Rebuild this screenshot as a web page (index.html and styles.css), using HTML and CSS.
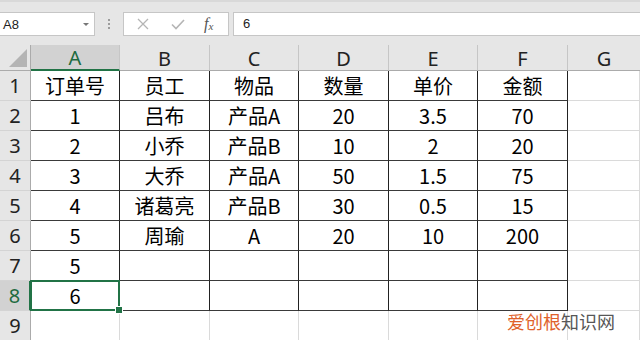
FILE: index.html
```html
<!DOCTYPE html>
<html lang="zh-CN">
<head>
<meta charset="utf-8">
<link rel="stylesheet" href="styles.css">
</head>
<body>
<div class="app">
  <div class="toolbar">
    <div class="namebox"><span class="ref">A8</span><span class="caret"></span></div>
    <div class="grip"><i></i><i></i><i></i></div>
    <div class="fbtns">
      <svg class="ic" width="14" height="14" viewBox="0 0 14 14"><path d="M2 2L12 12M12 2L2 12" stroke="#b5b5b5" stroke-width="1.3" fill="none"/></svg>
      <svg class="ic" width="16" height="14" viewBox="0 0 16 14"><path d="M2 7.5L6 11.5L14 3" stroke="#b5b5b5" stroke-width="1.6" fill="none"/></svg>
      <span class="fx">f<sub>x</sub></span>
    </div>
    <div class="finput">6</div>
  </div>
  <div class="sheet">
    <div class="corner"><span class="tri"></span></div>
    <div class="ch active">A</div><div class="ch">B</div><div class="ch">C</div><div class="ch">D</div><div class="ch">E</div><div class="ch">F</div><div class="ch last">G</div>

    <div class="rh">1</div><div class="c t">订单号</div><div class="c t">员工</div><div class="c t">物品</div><div class="c t">数量</div><div class="c t">单价</div><div class="c t">金额</div><div class="c"></div>
    <div class="rh">2</div><div class="c t">1</div><div class="c t">吕布</div><div class="c t">产品A</div><div class="c t">20</div><div class="c t">3.5</div><div class="c t">70</div><div class="c"></div>
    <div class="rh">3</div><div class="c t">2</div><div class="c t">小乔</div><div class="c t">产品B</div><div class="c t">10</div><div class="c t">2</div><div class="c t">20</div><div class="c"></div>
    <div class="rh">4</div><div class="c t">3</div><div class="c t">大乔</div><div class="c t">产品A</div><div class="c t">50</div><div class="c t">1.5</div><div class="c t">75</div><div class="c"></div>
    <div class="rh">5</div><div class="c t">4</div><div class="c t">诸葛亮</div><div class="c t">产品B</div><div class="c t">30</div><div class="c t">0.5</div><div class="c t">15</div><div class="c"></div>
    <div class="rh">6</div><div class="c t">5</div><div class="c t">周瑜</div><div class="c t">A</div><div class="c t">20</div><div class="c t">10</div><div class="c t">200</div><div class="c"></div>
    <div class="rh">7</div><div class="c t">5</div><div class="c t"></div><div class="c t"></div><div class="c t"></div><div class="c t"></div><div class="c t"></div><div class="c"></div>
    <div class="rh active">8</div><div class="c t sel">6</div><div class="c t"></div><div class="c t"></div><div class="c t"></div><div class="c t"></div><div class="c t"></div><div class="c"></div>
    <div class="rh">9</div><div class="c"></div><div class="c"></div><div class="c"></div><div class="c"></div><div class="c"></div><div class="c"></div><div class="c"></div>
  </div>
  <div class="watermark"><span class="wm-a">爱创根</span><span class="wm-b">知识网</span></div>
</div>
</body>
</html>
```
FILE: styles.css
```css
* { box-sizing: border-box; }
html, body { margin: 0; padding: 0; }
body {
  width: 640px;
  height: 340px;
  overflow: hidden;
  background: #fff;
  font-family: "Noto Sans CJK SC", "Noto Sans", sans-serif;
}
.app { position: relative; width: 640px; height: 340px; overflow: hidden; }

.toolbar {
  height: 45px;
  background: #e6e6e6;
  border-top: 2px solid #d9d9d9;
  display: flex;
  align-items: flex-start;
  padding-top: 10px;
}
.namebox {
  width: 95px;
  height: 24px;
  background: #fff;
  border: 1px solid #c6c6c6;
  border-left: none;
  display: flex;
  align-items: center;
  justify-content: space-between;
  padding: 0 5px 0 3px;
  font-family: "Liberation Sans", "Noto Sans", sans-serif;
  font-size: 13px;
  color: #222;
}
.caret {
  width: 0; height: 0;
  border-left: 3.5px solid transparent;
  border-right: 3.5px solid transparent;
  border-top: 3.5px solid #777;
}
.grip {
  width: 28px;
  height: 24px;
  display: flex;
  flex-direction: column;
  align-items: center;
  justify-content: center;
  gap: 2px;
}
.grip i { display: block; width: 2px; height: 2px; background: #9c9c9c; }
.fbtns {
  width: 106px;
  height: 24px;
  background: #fff;
  border: 1px solid #c6c6c6;
  display: flex;
  align-items: center;
  padding-left: 12px;
}
.fbtns .ic { flex: none; }
.fbtns .ic + .ic { margin-left: 20px; }
.fx {
  margin-left: 18px;
  font-family: "Liberation Serif", serif;
  font-style: italic;
  font-size: 16px;
  color: #555;
}
.fx sub { font-size: 11px; vertical-align: -1px; }
.finput {
  flex: 1;
  margin-left: 4px;
  height: 24px;
  background: #fff;
  border: 1px solid #c6c6c6;
  border-right: none;
  padding-left: 9px;
  font-family: "Liberation Sans", sans-serif;
  font-size: 13px;
  line-height: 22px;
  color: #222;
}

.sheet {
  display: grid;
  grid-template-columns: 31px 89px 90px 89px 90px 89px 90px 1fr;
  grid-template-rows: 26px repeat(9, 30px);
}
.corner {
  position: relative;
  background: #e6e6e6;
  border-right: 1px solid #ababab;
  border-bottom: 1px solid #ababab;
}
.tri {
  position: absolute;
  right: 3px;
  bottom: 3px;
  width: 0; height: 0;
  border-left: 18px solid transparent;
  border-bottom: 18px solid #b4b4b4;
}
.ch {
  background: #e6e6e6;
  border-right: 1px solid #c6c6c6;
  border-bottom: 1px solid #ababab;
  display: flex;
  align-items: center;
  justify-content: center;
  font-family: "Noto Sans", sans-serif;
  font-size: 20px;
  color: #222;
  padding-top: 1px;
}
.ch.last { border-right: none; }
.ch.active {
  background: #d2d2d2;
  color: #1e6b40;
  border-bottom: 2px solid #217346;
}
.rh {
  background: #e6e6e6;
  border-right: 1px solid #ababab;
  border-bottom: 1px solid #d4d4d4;
  display: flex;
  align-items: center;
  justify-content: center;
  font-family: "Noto Sans", sans-serif;
  font-size: 20px;
  color: #222;
}
.rh.active {
  background: #d2d2d2;
  color: #1e6b40;
  border-right: 2px solid #217346;
}
.c {
  border-right: 1px solid #dadada;
  border-bottom: 1px solid #dadada;
  display: flex;
  align-items: center;
  justify-content: center;
  font-size: 20px;
  color: #000;
}
.c.t {
  border-right-color: #222;
  border-bottom-color: #3a3a3a;
}
.sel { position: relative; }
.sel::after {
  content: "";
  position: absolute;
  left: -1px; top: -1px; right: -1px; bottom: -1px;
  border: 2px solid #217346;
}
.sel::before {
  content: "";
  position: absolute;
  right: -4px;
  bottom: -4px;
  width: 6px;
  height: 6px;
  background: #217346;
  border: 1px solid #fff;
  z-index: 2;
}
.watermark {
  position: absolute;
  left: 507px;
  top: 310px;
  font-size: 18px;
  line-height: 22px;
  white-space: nowrap;
}
.wm-a { color: #e0622b; }
.wm-b { color: #575757; }
```
